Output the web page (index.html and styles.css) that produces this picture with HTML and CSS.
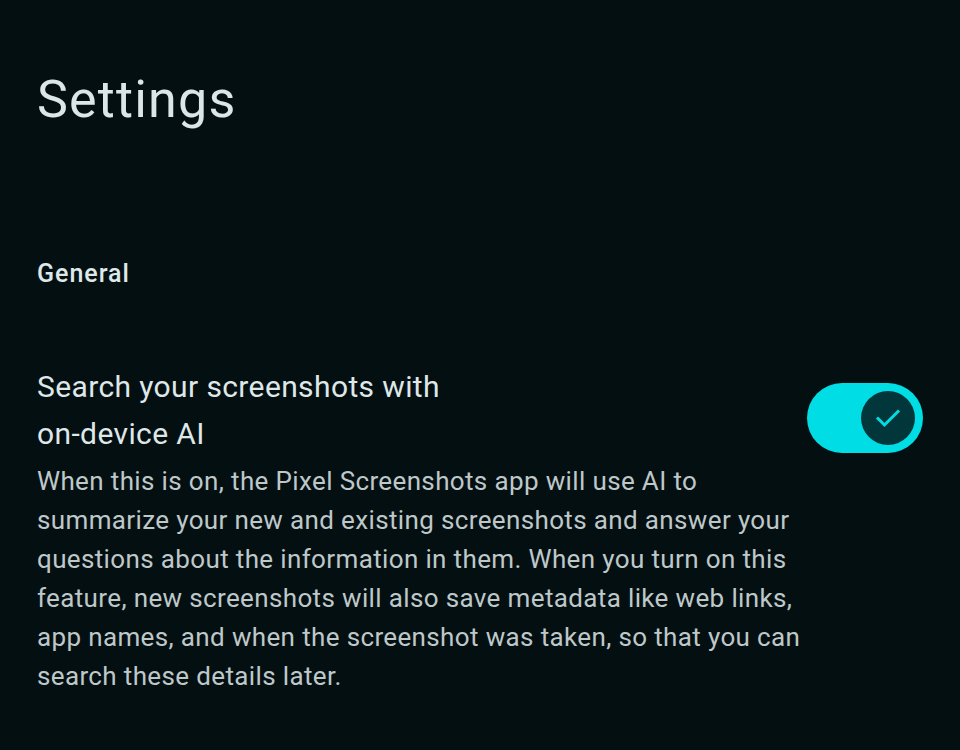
FILE: index.html
```html
<!DOCTYPE html>
<html lang="en">
<head>
<meta charset="utf-8">
<title>Settings</title>
<link rel="stylesheet" href="styles.css">
</head>
<body>
<main class="page">
  <h1 class="page-title">Settings</h1>
  <h2 class="section-title">General</h2>
  <div class="pref">
    <div class="pref-text">
      <div class="pref-title">Search your screenshots with <span class="nowrap">on-device</span> AI</div>
      <p class="pref-summary">When this is on, the Pixel Screenshots app will use AI to summarize your new and existing screenshots and answer your questions about the information in them. When you turn on this feature, new screenshots will also save metadata like web links, app names, and when the screenshot was taken, so that you can search these details later.</p>
    </div>
    <div class="switch" role="switch" aria-checked="true">
      <div class="thumb">
        <svg width="30" height="24" viewBox="0 0 30 24" aria-hidden="true">
          <path d="M4 11.5 L11.5 19 L26 4.5" fill="none" stroke="#00dde4" stroke-width="3" stroke-linecap="butt" stroke-linejoin="miter"/>
        </svg>
      </div>
    </div>
  </div>
</main>
</body>
</html>
```
FILE: styles.css
```css
html, body {
  margin: 0;
  padding: 0;
}
body {
  background: #040f12;
  font-family: Roboto, "Noto Sans", sans-serif;
  color: #dde5e6;
  width: 960px;
  height: 750px;
  overflow: hidden;
}
.page {
  padding: 70px 37px 0 37px;
}
.page-title {
  margin: 0;
  font-size: 52px;
  line-height: 60px;
  font-weight: 400;
  letter-spacing: 1.2px;
  color: #dde6e7;
}
.section-title {
  margin: 129px 0 0 0;
  font-size: 25px;
  line-height: 30px;
  font-weight: 500;
  letter-spacing: 1px;
  color: #dfe8e9;
}
.pref {
  display: flex;
  align-items: flex-start;
  margin-top: 74px;
}
.pref-text {
  flex: 1;
  min-width: 0;
}
.pref-title {
  font-size: 30px;
  line-height: 47px;
  letter-spacing: 0.38px;
  color: #dfe7e8;
  max-width: 470px;
}
.nowrap {
  white-space: nowrap;
}
.pref-summary {
  margin: 5px 0 0 0;
  font-size: 26px;
  line-height: 39px;
  letter-spacing: 0.36px;
  color: #bec8c9;
}
.switch {
  flex: none;
  width: 116px;
  height: 70px;
  margin-top: 20px;
  border-radius: 35px;
  background: #00dde4;
  display: flex;
  align-items: center;
  justify-content: flex-end;
  padding-right: 8px;
  box-sizing: border-box;
}
.thumb {
  width: 54px;
  height: 54px;
  border-radius: 50%;
  background: #01363b;
  display: flex;
  align-items: center;
  justify-content: center;
}
.thumb svg {
  display: block;
}
```
